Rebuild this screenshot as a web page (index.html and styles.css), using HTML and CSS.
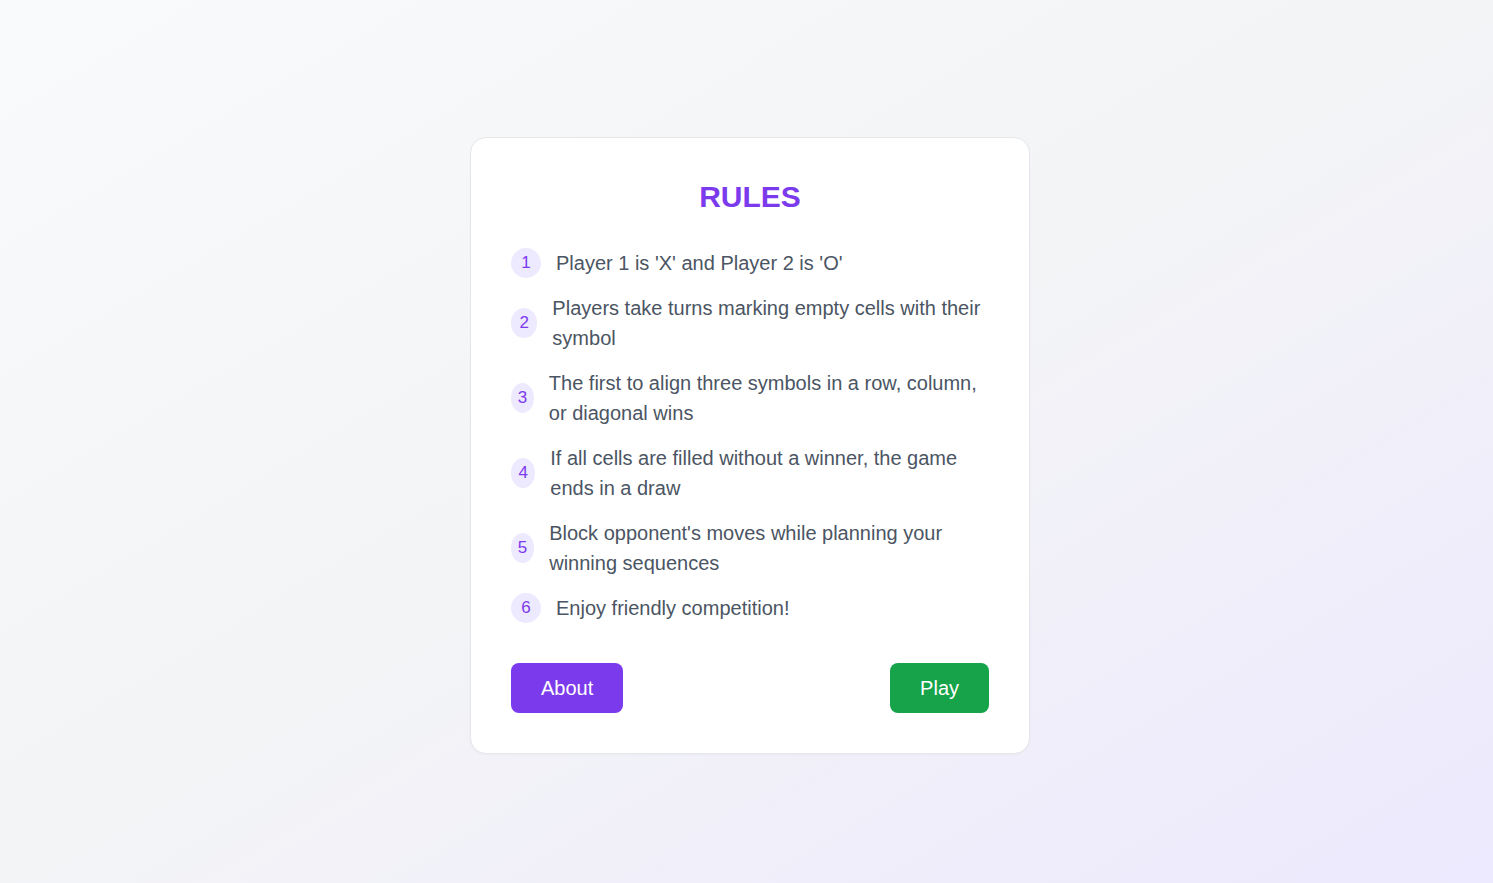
FILE: index.html
```html
<!DOCTYPE html>
<html lang="en">
<head>
<meta charset="utf-8">
<title>Rules</title>
<link rel="stylesheet" href="styles.css">
</head>
<body>
<main class="page">
  <section class="card">
    <h1 class="title">RULES</h1>
    <ol class="rules">
      <li class="rule"><span class="num">1</span><span class="text">Player 1 is 'X' and Player 2 is 'O'</span></li>
      <li class="rule"><span class="num">2</span><span class="text">Players take turns marking empty cells with their symbol</span></li>
      <li class="rule"><span class="num">3</span><span class="text">The first to align three symbols in a row, column, or diagonal wins</span></li>
      <li class="rule"><span class="num">4</span><span class="text">If all cells are filled without a winner, the game ends in a draw</span></li>
      <li class="rule"><span class="num">5</span><span class="text">Block opponent's moves while planning your winning sequences</span></li>
      <li class="rule"><span class="num">6</span><span class="text">Enjoy friendly competition!</span></li>
    </ol>
    <div class="actions">
      <button class="btn btn-about">About</button>
      <button class="btn btn-play">Play</button>
    </div>
  </section>
</main>
</body>
</html>
```
FILE: styles.css
```css
* { box-sizing: border-box; }
html, body { margin: 0; padding: 0; }
body {
  font-family: "Liberation Sans", Arial, sans-serif;
  background: linear-gradient(to bottom right, #f9fafb 0%, #f3f4f6 50%, #ede9fe 100%);
  min-height: 100vh;
}
.page {
  min-height: 100vh;
  display: flex;
  align-items: center;
  justify-content: center;
  padding: 8px 0 0 7px;
}
.card {
  width: 560px;
  background: #ffffff;
  border: 1px solid #e5e7eb;
  border-radius: 16px;
  padding: 41px 40px 40px;
  box-shadow: 0 1px 2px rgba(0,0,0,0.03);
}
.title {
  margin: 0 0 33px;
  text-align: center;
  font-size: 30px;
  line-height: 36px;
  font-weight: 700;
  color: #7c3aed;
}
.rules {
  list-style: none;
  margin: 0 0 40px;
  padding: 0;
  display: flex;
  flex-direction: column;
  gap: 15px;
}
.rule {
  display: flex;
  align-items: center;
  gap: 15px;
}
.num {
  width: 30px;
  height: 30px;
  border-radius: 50%;
  background: #ede9fe;
  color: #7c3aed;
  font-size: 17px;
  display: flex;
  align-items: center;
  justify-content: center;
}
.text {
  font-size: 20px;
  line-height: 30px;
  color: #4b5563;
}
.actions {
  display: flex;
  justify-content: space-between;
}
.btn {
  border: none;
  border-radius: 8px;
  padding: 10px 30px;
  font-family: inherit;
  font-size: 20px;
  line-height: 30px;
  color: #ffffff;
  cursor: pointer;
}
.btn-about { background: #7c3aed; }
.btn-play { background: #16a34a; }
```
